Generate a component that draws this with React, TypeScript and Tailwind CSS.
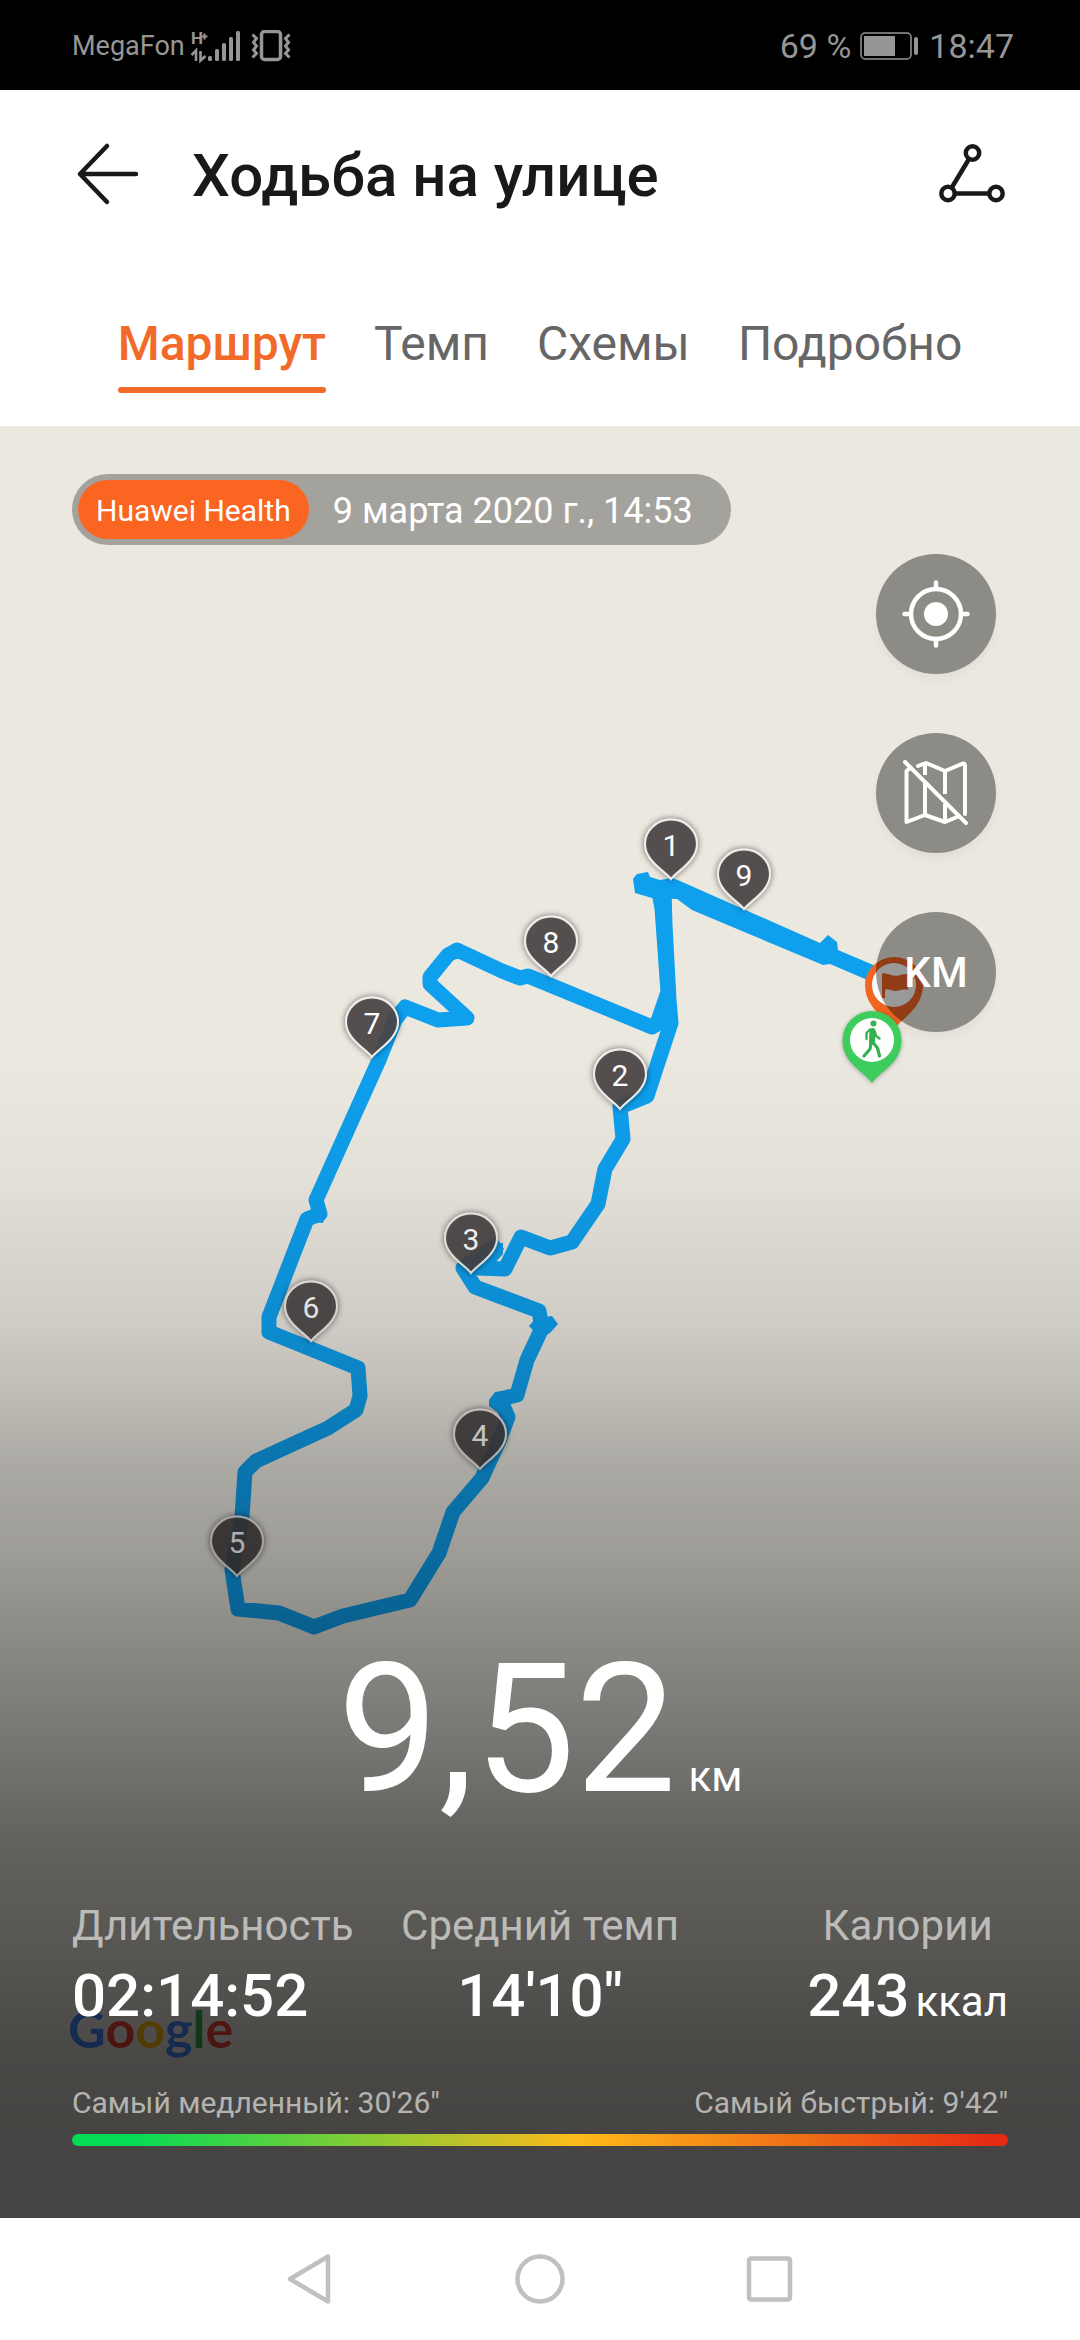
import React, { useState } from "react";
import clsx from "clsx";

interface IMarker {
    label: string;
    x: number;
    y: number;
}

const TABS = ["Маршрут", "Темп", "Схемы", "Подробно"];

// x / y is where the tip of the pin touches the route
const MARKERS: IMarker[] = [
    { label: "1", x: 671, y: 880 },
    { label: "9", x: 744, y: 910 },
    { label: "8", x: 551, y: 977 },
    { label: "7", x: 372, y: 1058 },
    { label: "2", x: 620, y: 1110 },
    { label: "3", x: 471, y: 1274 },
    { label: "6", x: 311, y: 1342 },
    { label: "4", x: 480, y: 1470 },
    { label: "5", x: 237, y: 1577 },
];

const GOOGLE = [
    { letter: "G", color: "text-[#4285f4]" },
    { letter: "o", color: "text-[#ea4335]" },
    { letter: "o", color: "text-[#fbbc05]" },
    { letter: "g", color: "text-[#4285f4]" },
    { letter: "l", color: "text-[#34a853]" },
    { letter: "e", color: "text-[#ea4335]" },
];

const StatusBar = () => (
    <div className="flex h-[90px] items-center justify-between bg-black pl-[72px] pr-[66px] pt-[2px] text-[#969696]">
        <div className="flex items-center gap-[6px]">
            <span className="text-[27px] leading-9">MegaFon</span>
            <svg className="h-10 w-[50px]" viewBox="0 -4 50 40" fill="currentColor">
                <text x="0" y="14" fontSize="17" fontWeight="700">
                    H
                </text>
                <path d="M13.5 3.5v6M10.5 6.5h6" stroke="currentColor" strokeWidth="2" />
                <path d="M0.5 25L5 20.5V31M9.5 21v9.5L14.5 26" fill="none" stroke="currentColor" strokeWidth="2.6" />
                <rect x="17" y="26" width="4" height="5" rx="1.5" />
                <rect x="24" y="19" width="4" height="12" rx="1.5" />
                <rect x="31" y="13" width="4" height="18" rx="1.5" />
                <rect x="38" y="7" width="4" height="24" rx="1.5" />
                <rect x="45" y="1" width="4" height="30" rx="1.5" />
            </svg>
            <svg className="ml-1 h-8 w-10" viewBox="0 0 40 32" fill="none" stroke="currentColor" strokeWidth="3">
                <rect x="10.5" y="1.5" width="19" height="28" rx="3" strokeWidth="3.5" />
                <path d="M1.5 4.5l4 4-3 4 3 3.5-3 4 3 3.5-4 4M38.5 4.500l-4 4 3 4-3 3.5 3 4-3 3.5 4 4" />
            </svg>
        </div>
        <div className="flex items-center gap-[9px] text-[34px] leading-10">
            <span>69 %</span>
            <svg className="h-7 w-[60px]" viewBox="0 0 60 28" fill="currentColor">
                <rect x="1" y="1" width="50" height="26" rx="4" fill="none" stroke="currentColor" strokeWidth="1.5" />
                <rect x="4" y="4" width="31" height="20" />
                <rect x="54" y="5" width="4" height="18" rx="2" />
            </svg>
            <span>18:47</span>
        </div>
    </div>
);

const Pin = ({ label, x, y }: IMarker) => (
    <g transform={`translate(${x} ${y})`}>
        <path
            d="M0 -1C-6 -9 -26 -19 -26 -36A26 24.500 0 0 1 26 -36C26 -19 6 -9 0 -1Z"
            fill="#4a4745"
            fillOpacity="0.85"
            stroke="#f0eeea"
            strokeWidth="2"
            filter="url(#pin-shadow)"
        />
        <text y="-24" textAnchor="middle" fontSize="30" fill="#fff">
            {label}
        </text>
    </g>
);

const RouteMap = () => (
    <svg
        className="absolute left-0 top-0 w-full"
        viewBox="0 426 1080 1792"
        role="img"
        aria-label="Маршрут"
    >
        <defs>
            <filter id="pin-shadow" x="-30%" y="-30%" width="160%" height="160%">
                <feDropShadow dx="0" dy="0" stdDeviation="3" floodColor="#000" floodOpacity="0.6" />
            </filter>
        </defs>

        {/* Route */}
        <g fill="none" stroke="#0e9fed" strokeWidth="15" strokeLinejoin="round">
            <path d="M664 890L665 925L669 1000L671 1023L647 1096L620 1107L623 1139L605 1169L598 1204L572 1242L550 1248L521 1237L505 1269L478 1268L496 1249" />
            <path d="M500 1243L463 1268L475 1287L539 1311L542 1328L527 1360L517 1395L500 1399L508 1417L498 1443L482 1478L453 1512L439 1553L410 1600L343 1616L314 1627L279 1613L238 1609L232 1570L242 1517L245 1472L256 1461L328 1428L356 1410L360 1396L358 1368L269 1332L269 1317L307 1219L320 1214L316 1200L379 1060L395 1020L405 1007L438 1020L467 1018L430 984L430 977L448 955L457 950L502 971L520 978L528 976L652 1027L657 1024L668 992L662 908L659 892" />
        </g>
        <g fill="#0e9fed">
            <path d="M633 879L637 874L648 872L650 877L660 880L672 878L680 881L820 943L828 935L837 942L838 950L892 973L886 988L830 964L823 965L692 910L677 899L652 898L635 893Z" />
            <path d="M529 1326L536 1318L552 1316L558 1324L550 1333L540 1338Z" />
            <path d="M315 1206L324 1203L326 1214L323 1223L312 1222Z" />
            <path d="M489 1406L489 1400L495 1392L504 1391L512 1410L497 1412Z" />
            <path d="M495 1243H503V1254L494 1264Z" />
        </g>

        {MARKERS.map((marker) => (
            <Pin key={marker.label} {...marker} />
        ))}

        {/* Finish */}
        <path d="M894 1030C888 1019 865 1009 865 985A29 28 0 0 1 923 985C923 1009 900 1019 894 1030Z" fill="#f26522" />
        <circle cx="894" cy="985" r="22" fill="#fff" />
        <path d="M882 973.5C888 972 893 978 900 975C903 974 906 974 908 974V990C901 988 897 993 891 990C888 989 886 989 885 990V998H882Z" fill="#f26522" />

        {/* Start */}
        <path
            d="M872 1083C864 1071 842.5 1064 842.5 1040A29.5 29 0 0 1 901.5 1040C901.5 1064 880 1071 872 1083Z"
            fill="#3ecd5c"
            filter="drop-shadow(0 1px 2px rgba(0,0,0,0.3))"
        />
        <circle cx="872" cy="1040" r="22" fill="#fff" />
        <g fill="none" stroke="#35b14f" strokeLinecap="round" strokeLinejoin="round">
            <circle cx="873.5" cy="1023.5" r="3" fill="#35b14f" stroke="none" />
            <path d="M872.5 1031L872 1042" strokeWidth="6" />
            <path d="M870 1029.5L866.5 1033V1039M875 1032L876 1036L879.5 1038.5" strokeWidth="2.4" />
            <path d="M871 1043L870 1049L864 1056M873.5 1043L877.5 1048L879.5 1056" strokeWidth="3.2" />
        </g>
    </svg>
);

const RoundButton = ({
    label,
    children,
}: {
    label: string;
    children: React.ReactNode;
}) => (
    <button
        aria-label={label}
        className="flex size-[120px] items-center justify-center rounded-full bg-black/40 text-[42px] font-medium text-white shadow-[0_6px_8px_rgba(0,0,0,0.04)]"
    >
        {children}
    </button>
);

const Controls = () => (
    <div className="mr-3 mt-[9px] flex flex-col gap-[59px] self-end">
        <RoundButton label="Моё местоположение">
            <svg className="size-[68px]" viewBox="0 0 68 68" fill="none" stroke="currentColor" strokeWidth="4.5" strokeLinecap="round">
                <circle cx="34" cy="34" r="25" />
                <circle cx="34" cy="34" r="12" fill="currentColor" stroke="none" />
                <path d="M34 2.500V9M34 59V65.500M2.500 34H9M59 34H65.500" />
            </svg>
        </RoundButton>
        <RoundButton label="Скрыть карту">
            <svg className="size-[66px]" viewBox="0 0 66 66" fill="none" stroke="currentColor" strokeWidth="4" strokeLinecap="round" strokeLinejoin="round">
                <path d="M6 9L3.5 11V62L22 55L42 62L54 57" />
                <path d="M15 6L23 3L42 11L60 3.5Q62 3 62 6V54" />
                <path d="M22 4V15M22 23V55M42 11V34M42 44V62" strokeLinecap="butt" />
                <path d="M2 2L63 63" />
            </svg>
        </RoundButton>
        <RoundButton label="KM">KM</RoundButton>
    </div>
);

const App: React.FC = () => {
    const [activeTab, setActiveTab] = useState(TABS[0]);

    return (
        <div className="flex min-h-screen flex-col bg-white font-['Roboto',sans-serif]">
            <StatusBar />

            {/* Title */}
            <header className="flex h-[168px] items-center pl-[75px] pr-[72px] text-[#191919]">
                <button aria-label="Назад">
                    <svg className="size-[66px]" viewBox="0 0 66 66" fill="none" stroke="currentColor" strokeWidth="4.5" strokeLinecap="round" strokeLinejoin="round">
                        <path d="M61 33H6M32 5L5 33L32 61" />
                    </svg>
                </button>
                <h1 className="ml-[51px] flex-1 pt-1 text-[60px] font-medium leading-[72px]">
                    Ходьба на улице
                </h1>
                <button aria-label="Маршрут и экспорт">
                    <svg className="size-[72px]" viewBox="0 0 72 72" fill="none" stroke="currentColor" strokeWidth="4.5">
                        <circle cx="36.5" cy="15" r="6.7" />
                        <circle cx="12" cy="55.5" r="6.7" />
                        <circle cx="60" cy="55.5" r="6.7" />
                        <path d="M33 21L15.5 50M19 55.5H53" />
                    </svg>
                </button>
            </header>

            {/* Tabs */}
            <nav role="tablist" className="flex h-[168px] items-start justify-center gap-12 pt-[58px] text-[48px] leading-[56px]">
                {TABS.map((tab) => (
                    <button
                        key={tab}
                        role="tab"
                        aria-selected={activeTab === tab}
                        onClick={() => setActiveTab(tab)}
                        className={clsx(
                            "flex flex-col gap-[15px]",
                            activeTab === tab ? "font-medium text-[#f26a2a]" : "text-[#666666]"
                        )}
                    >
                        {tab}
                        <span
                            className={clsx(
                                "h-[6px] w-full rounded-full",
                                activeTab === tab ? "bg-[#f26a2a]" : "bg-transparent"
                            )}
                        />
                    </button>
                ))}
            </nav>

            {/* Map */}
            <main className="relative flex flex-1 flex-col overflow-hidden bg-[#ebe8e0] px-[72px] pb-[72px] pt-12">
                <RouteMap />
                <span className="absolute bottom-[160px] left-[68px] font-['Lato',sans-serif] text-[52px] font-bold leading-[60px] [text-shadow:0_0_6px_rgba(255,255,255,0.5)]">
                    {GOOGLE.map(({ letter, color }, index) => (
                        <span key={index} className={color}>
                            {letter}
                        </span>
                    ))}
                </span>
                <div className="absolute inset-0 bg-[linear-gradient(to_bottom,rgba(0,0,0,0)_35%,rgba(0,0,0,0.035)_42%,rgba(0,0,0,0.08)_46%,rgba(0,0,0,0.12)_50%,rgba(0,0,0,0.19)_54%,rgba(0,0,0,0.27)_58%,rgba(0,0,0,0.33)_63%,rgba(0,0,0,0.41)_68%,rgba(0,0,0,0.5)_74%,rgba(0,0,0,0.58)_79%,rgba(0,0,0,0.63)_85%,rgba(0,0,0,0.69)_91%,rgba(0,0,0,0.705)_95%)]" />

                <div className="relative flex flex-1 flex-col text-white">
                    <div className="flex h-[71px] items-center self-start rounded-full bg-black/30 pl-[6px] pr-[38px]">
                        <span className="flex h-[59px] items-center rounded-full bg-[#fb6522] px-[18px] pt-[2px] text-[30px]">
                            Huawei Health
                        </span>
                        <time className="ml-6 pt-[2px] text-[36px]">9 марта 2020 г., 14:53</time>
                    </div>

                    <Controls />

                    {/* Distance */}
                    <p className="mt-auto flex items-baseline justify-center gap-3 text-[180px] leading-[180px]">
                        9,52
                        <span className="text-[42px] leading-[48px]">км</span>
                    </p>

                    {/* Summary */}
                    <dl className="mt-[82px] grid grid-cols-[1fr_auto_1fr]">
                        <div className="flex flex-col gap-[10px]">
                            <dt className="text-[42px] leading-[48px] text-white/60">Длительность</dt>
                            <dd className="text-[60px] font-medium leading-[72px]">02:14:52</dd>
                        </div>
                        <div className="flex flex-col items-center gap-[10px]">
                            <dt className="text-[42px] leading-[48px] text-white/60">Средний темп</dt>
                            <dd className="text-[60px] font-medium leading-[72px]">14'10"</dd>
                        </div>
                        <div className="flex flex-col items-center gap-[10px] justify-self-end">
                            <dt className="text-[42px] leading-[48px] text-white/60">Калории</dt>
                            <dd className="flex items-baseline gap-[6px] text-[60px] font-medium leading-[72px]">
                                243
                                <span className="text-[42px] font-normal leading-[48px]">ккал</span>
                            </dd>
                        </div>
                    </dl>

                    {/* Pace scale */}
                    <div className="mt-[53px] flex justify-between text-[30px] leading-9 text-white/60">
                        <span>Самый медленный: 30'26"</span>
                        <span>Самый быстрый: 9'42"</span>
                    </div>
                    <div className="mt-[13px] h-3 rounded-full bg-[linear-gradient(to_right,#05db55_0%,#05db55_6%,#fdbb1a_54%,#e42c14_98%)]" />
                </div>
            </main>

            {/* System navigation */}
            <footer className="flex h-[122px] items-center justify-center gap-[166px] text-[#c0c0c0]">
                <button aria-label="Назад">
                    <svg className="size-16" viewBox="0 0 64 64" fill="none" stroke="currentColor" strokeWidth="4.5" strokeLinejoin="round">
                        <path d="M50 9.5V54.5L12 32Z" />
                    </svg>
                </button>
                <button aria-label="Домой">
                    <svg className="size-16" viewBox="0 0 64 64" fill="none" stroke="currentColor" strokeWidth="4.5">
                        <circle cx="32" cy="32" r="22.5" />
                    </svg>
                </button>
                <button aria-label="Недавние">
                    <svg className="size-16" viewBox="0 0 64 64" fill="none" stroke="currentColor" strokeWidth="4.5">
                        <rect x="11" y="11.5" width="41" height="41" rx="2" />
                    </svg>
                </button>
            </footer>
        </div>
    );
};

export default App;
